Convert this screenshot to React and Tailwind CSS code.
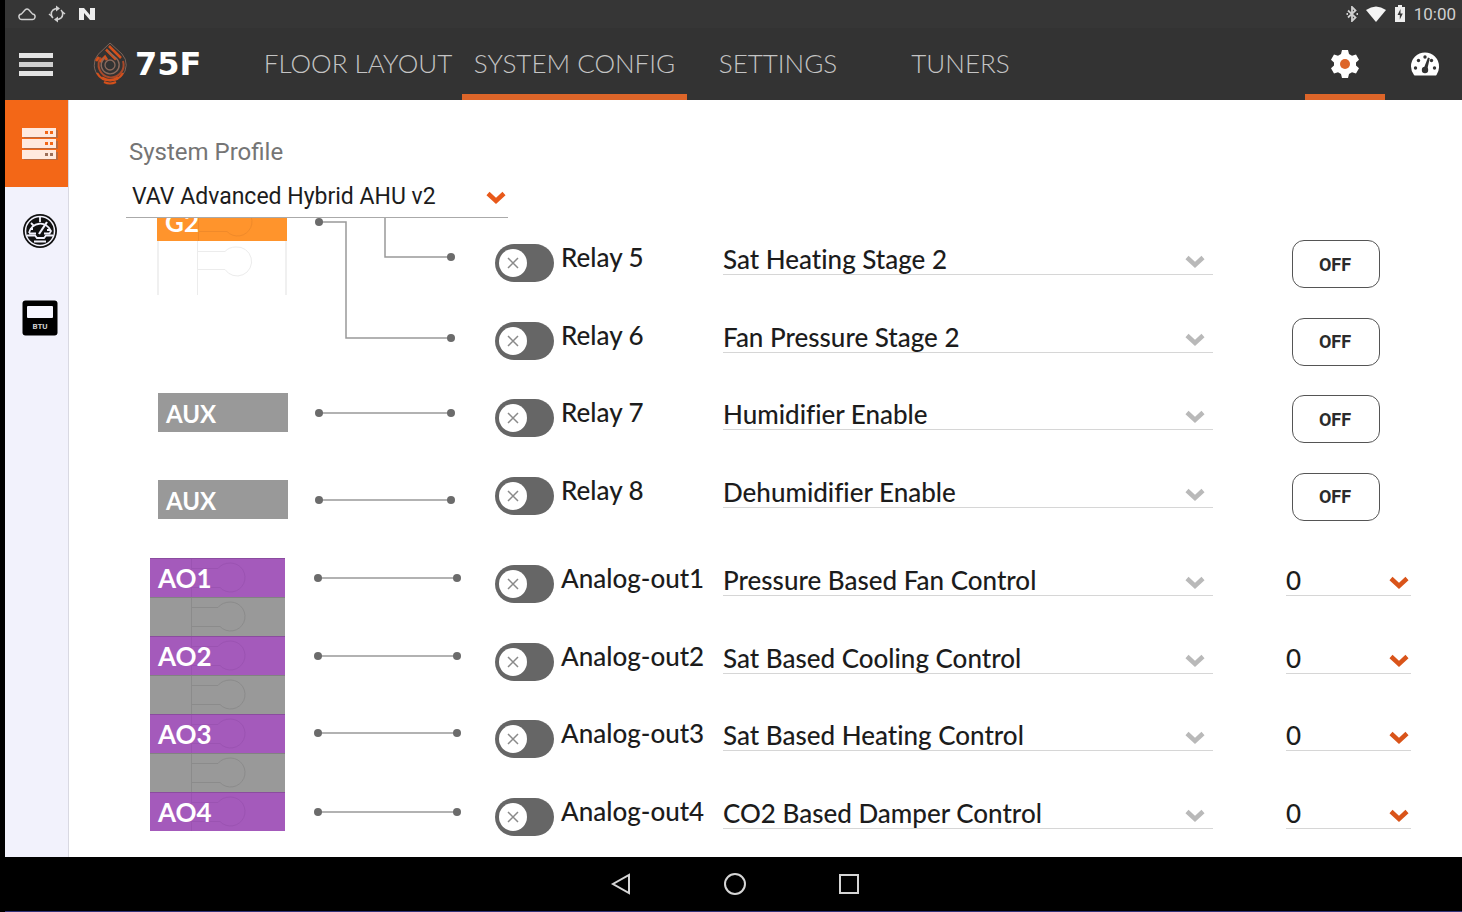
import { useState } from 'react';

const TABS = [
  { name: 'FLOOR LAYOUT', width: 'w-[208px]' },
  { name: 'SYSTEM CONFIG', width: 'w-[225px]' },
  { name: 'SETTINGS', width: 'w-[182px]' },
  { name: 'TUNERS', width: 'w-[183px]' },
];

const PROFILES = ['VAV Advanced Hybrid AHU v2', 'VAV Fully Modulating AHU', 'VAV Staged RTU'];

const RELAYS = [
  { id: 'relay5', label: 'Relay 5', mapping: 'Sat Heating Stage 2' },
  { id: 'relay6', label: 'Relay 6', mapping: 'Fan Pressure Stage 2' },
  { id: 'relay7', label: 'Relay 7', mapping: 'Humidifier Enable' },
  { id: 'relay8', label: 'Relay 8', mapping: 'Dehumidifier Enable' },
];

const ANALOGS = [
  { id: 'analog1', label: 'Analog-out1', mapping: 'Pressure Based Fan Control' },
  { id: 'analog2', label: 'Analog-out2', mapping: 'Sat Based Cooling Control' },
  { id: 'analog3', label: 'Analog-out3', mapping: 'Sat Based Heating Control' },
  { id: 'analog4', label: 'Analog-out4', mapping: 'CO2 Based Damper Control' },
];

const WIRES = [
  { path: 'M31 4H58V120H163', dots: [[31, 4], [163, 120]] },
  { path: 'M97 0V39H163', dots: [[163, 39]] },
  { path: 'M31 195H163', dots: [[31, 195], [163, 195]] },
  { path: 'M31 282H163', dots: [[31, 282], [163, 282]] },
  { path: 'M30 360H169', dots: [[30, 360], [169, 360]] },
  { path: 'M30 438H169', dots: [[30, 438], [169, 438]] },
  { path: 'M30 515H169', dots: [[30, 515], [169, 515]] },
  { path: 'M30 594H169', dots: [[30, 594], [169, 594]] },
];

function Chevron({ className }) {
  return (
    <svg viewBox="0 0 20 14" className={`pointer-events-none absolute h-[14px] w-5 ${className}`} fill="none" stroke="currentColor" strokeWidth="4.5">
      <path d="M2 2.5L10 10L18 2.5" />
    </svg>
  );
}

function StatusBar() {
  return (
    <div className="flex h-7 items-center justify-between bg-[#363636] pr-[6px] pl-[13px] text-[#d0d0d0]">
      <div className="flex items-center gap-3">
        <svg viewBox="0 0 18 14" className="h-[14px] w-[18px]" fill="none" stroke="currentColor" strokeWidth="1.5">
          <path d="M4 12.500a2.800 2.800 0 0 1-.5-5.600L7 3Q9 1 11 3l3.500 3.900a2.800 2.800 0 0 1-.5 5.600z" />
        </svg>
        <svg viewBox="0 0 18 18" className="h-[18px] w-[18px]" fill="none" stroke="currentColor" strokeWidth="1.6">
          <path d="M5 13A5.500 5.500 0 0 1 5 5L8 3.500M13 5A5.500 5.500 0 0 1 13 13L10 14.500" />
          <path d="M8 0.500L12 3.500L8 6.500zM10 11.500L6 14.500L10 17.500z" fill="currentColor" stroke="none" />
          <path d="M1 9l2.500 2M17 9l-2.500-2" />
        </svg>
        <svg viewBox="0 0 18 14" className="h-[14px] w-[18px]" fill="#eeeeee">
          <path d="M1 1h5l6 7V1h5v12h-5L6 6v7H1z" />
        </svg>
      </div>
      <div className="flex items-center gap-[8px]">
        <svg viewBox="0 0 12 16" className="h-4 w-3" fill="none" stroke="currentColor" strokeWidth="1.8">
          <path d="M2 4.500L9.500 11.500L6 15V1L9.500 4.500L2 11.500" />
          <path d="M0.500 8h1.500M10.500 8h1.500" />
        </svg>
        <svg viewBox="0 0 20 16" className="h-4 w-5" fill="#f4f4f4">
          <path d="M0 4Q10-3 20 4L10 16z" />
        </svg>
        <svg viewBox="0 0 12 18" className="h-[18px] w-3" fill="#eeeeee">
          <path d="M4 0h4v2h3v15H1V2h3z" />
          <path d="M6.500 4L3.500 10h2.300v4.500L8.800 8.500H6.500z" fill="#363636" />
        </svg>
        <span className="font-['Roboto',sans-serif] text-[17px] leading-7">10:00</span>
      </div>
    </div>
  );
}

function Logo() {
  return (
    <a href="#home" className="ml-10 flex items-center gap-[6px]" aria-label="75F home">
      <svg viewBox="0 0 36 44" className="h-11 w-9" fill="none">
        <path d="M17 1L5 12.500A16 16 0 1 0 29 12Z" stroke="#7d6459" strokeWidth="1" />
        <path d="M13 7.500L23 17.500M16 4L28 16" stroke="#d4501b" strokeWidth="2.500" />
        <path d="M8 15.500A12.500 12.500 0 1 0 30 19" stroke="#a8492a" strokeWidth="2" />
        <path d="M3 19L6 15M7 20L12 15L14 18" stroke="#d4501b" strokeWidth="2.800" />
        <path d="M12 15.500A9 9 0 1 0 23 16L15 9" stroke="#8b6a5c" strokeWidth="1.400" />
        <circle cx="17" cy="23" r="5" stroke="#8b6a5c" strokeWidth="1.300" />
        <path d="M4 31A15 15 0 0 0 30 31M9 35.500A15 15 0 0 0 25 35.500" stroke="#d4501b" strokeWidth="2.200" />
        <path d="M11 40Q17 43 23 40" stroke="#d4501b" strokeWidth="2" />
      </svg>
      <span className="font-['DejaVu_Sans',sans-serif] text-[32px] leading-9 font-bold text-white">75F</span>
    </a>
  );
}

function NavBar({ tab, onTab }) {
  return (
    <div className="flex h-[72px] items-center bg-[#333333] pl-[14px]">
      <button aria-label="Menu" className="flex w-[34px] flex-col gap-1">
        <span className="h-[5px] w-full bg-[#e4e4e4]"></span>
        <span className="h-[5px] w-full bg-[#cfcfcf]"></span>
        <span className="h-[5px] w-full bg-[#e4e4e4]"></span>
      </button>
      <div className="w-[201px] shrink-0">
        <Logo />
      </div>
      <nav className="flex h-full flex-1">
        {TABS.map(({ name, width }) => (
          <button
            key={name}
            onClick={() => onTab(name)}
            className={`${width} h-full border-b-[6px] pt-[3px] font-['Lato',sans-serif] text-[26px] leading-8 font-light whitespace-nowrap text-[#c4c4c4] ${
              tab === name ? 'border-b-[#dd6529]' : 'border-b-transparent'
            }`}
          >
            {name}
          </button>
        ))}
      </nav>
      <button aria-label="Configuration" className="flex h-full w-20 items-center justify-center border-y-[6px] border-t-transparent border-b-[#dd6529]">
        <svg viewBox="0 0 28 28" className="h-7 w-7">
          <path
            d="M11 0h6l1 4 3 1.700 4-1.200 3 5.200-3 2.800v3l3 2.800-3 5.200-4-1.200-3 1.700-1 4h-6l-1-4-3-1.700-4 1.200-3-5.200 3-2.800v-3L0 9.700l3-5.200 4 1.200L10 4z"
            fill="#ffffff"
          />
          <circle cx="14" cy="14" r="5" fill="#dd6529" />
        </svg>
      </button>
      <button aria-label="Dashboard" className="flex h-full w-[77px] items-center justify-center pl-[3px]">
        <svg viewBox="0 0 28 24" className="h-6 w-7">
          <path d="M3 23A14 14 0 0 1 0 14.500a14 14 0 0 1 28 0A14 14 0 0 1 25.500 23q-.5.500-1.500.500H4.500Q3.500 23.500 3 23z" fill="#ffffff" />
          <g fill="#333333">
            <circle cx="4.500" cy="16" r="1.700" />
            <circle cx="7.500" cy="8.500" r="1.700" />
            <circle cx="14" cy="5" r="1.700" />
            <circle cx="20.500" cy="8.500" r="1.700" />
            <circle cx="23.500" cy="16" r="1.700" />
            <circle cx="14" cy="18" r="3.200" />
            <path d="M12.500 17L17 5.500l1.800.7L16 18.500z" />
          </g>
        </svg>
      </button>
    </div>
  );
}

function SideBar() {
  return (
    <aside className="flex w-16 shrink-0 flex-col border-r border-[#d9d9e2] bg-[#f2f2fc]">
      <button aria-label="System" className="flex h-[87px] items-center justify-center bg-[#f36717] pl-[6px]">
        <svg viewBox="0 0 36 32" className="h-8 w-9">
          <path d="M2 2h34v8H2zM2 13h34v8H2zM2 24h34v8H2z" fill="#b9683e" />
          <path d="M0 0h34v9H0zM0 11h34v9H0zM0 22h34v9H0z" fill="#ffe9de" />
          <path d="M23 3h3v3h-3zM28 3h3v3h-3zM23 14h3v3h-3zM28 14h3v3h-3z" fill="#f36717" />
          <path d="M23 25h3v3h-3zM28 25h3v3h-3z" fill="#9c6f5a" />
        </svg>
      </button>
      <button aria-label="Gauge" className="flex h-[87px] items-center justify-center pl-[6px]">
        <svg viewBox="0 0 36 36" className="h-9 w-9" fill="none">
          <circle cx="18" cy="18" r="17" fill="#111111" />
          <circle cx="18" cy="18" r="14.500" stroke="#f2f2fc" strokeWidth="1.500" />
          <path d="M7 20A11.500 11.500 0 0 1 29 18L27.500 20.500H22M7 20.500H14" stroke="#f2f2fc" strokeWidth="1.800" />
          <path d="M18 4V9M9 10l3 3M8 16h3M25 17h3" stroke="#f2f2fc" strokeWidth="1.800" />
          <path d="M17 21L25 9" stroke="#f2f2fc" strokeWidth="2.200" />
          <path d="M5 22.500H13L15 25H22L24 22.500H31M12 28.500H24" stroke="#f2f2fc" strokeWidth="1.800" />
        </svg>
      </button>
      <button aria-label="BTU meter" className="flex h-[87px] items-center justify-center pl-[6px]">
        <svg viewBox="0 0 36 36" className="h-9 w-9">
          <rect width="35" height="35" y="0.500" x="0.500" rx="3" fill="#000000" />
          <rect x="5" y="6" width="26" height="12" rx="1" fill="#f6f6ff" />
          <text x="18" y="29" textAnchor="middle" className="font-['Roboto',sans-serif] text-[8px] font-bold" fill="#d0d0d0">
            BTU
          </text>
        </svg>
      </button>
    </aside>
  );
}

function Keyhole({ className }) {
  return (
    <svg viewBox="0 0 135 39" className={`absolute inset-x-0 bottom-0 h-[39px] w-[135px] ${className}`} fill="none" stroke="currentColor">
      <path d="M41.500 0V39M41 10.500H68Q72 5 81 5A14.500 14.500 0 1 1 70 29.500H41" />
    </svg>
  );
}

function Terminal({ label, color, lines }) {
  return (
    <div className={`relative h-[39px] overflow-hidden border-t border-black/15 pl-2 font-['Lato',sans-serif] text-[26px] leading-[38px] font-bold text-white ${color}`}>
      <Keyhole className={lines} />
      <span className="relative">{label}</span>
    </div>
  );
}

function TerminalBlocks() {
  return (
    <div className="flex w-[139px] shrink-0 flex-col">
      <div className="ml-2 flex h-[23px] w-[130px] items-end overflow-hidden">
        <div className="w-full">
          <Terminal label="G2" color="bg-[#ff942c]" lines="text-[#f08a2a]" />
        </div>
      </div>
      <div className="ml-2 h-[54px] w-[130px] overflow-hidden border-x-2 border-[#f0f0f0]">
        <svg viewBox="0 0 126 54" className="h-[54px] w-[126px]" fill="none" stroke="#ececec">
          <path d="M38.500 0V54M38 10.500H66Q70 6 77 6A14.500 14.500 0 1 1 66 28.500H38" />
        </svg>
      </div>
      <div className="mt-[98px] ml-[9px] flex flex-col gap-12">
        {['first', 'second'].map((key) => (
          <div key={key} className="h-[39px] bg-[#999999] pl-2 font-['Lato',sans-serif] text-2xl leading-[42px] font-bold text-white">
            AUX
          </div>
        ))}
      </div>
      <div className="mt-[39px] ml-px w-[135px]">
        <Terminal label="AO1" color="bg-[#a45abb]" lines="text-[#9b53b2]" />
        <Terminal color="bg-[#999999]" lines="text-[#8b8b8b]" />
        <Terminal label="AO2" color="bg-[#a45abb]" lines="text-[#9b53b2]" />
        <Terminal color="bg-[#999999]" lines="text-[#8b8b8b]" />
        <Terminal label="AO3" color="bg-[#a45abb]" lines="text-[#9b53b2]" />
        <Terminal color="bg-[#999999]" lines="text-[#8b8b8b]" />
        <Terminal label="AO4" color="bg-[#a45abb]" lines="text-[#9b53b2]" />
      </div>
    </div>
  );
}

function Wires() {
  return (
    <svg viewBox="0 0 184 639" className="mr-[23px] h-[639px] w-[184px] shrink-0" fill="none">
      {WIRES.map(({ path, dots }) => (
        <g key={path}>
          <path d={path} stroke="#999999" strokeWidth="1.500" />
          {dots.map(([x, y]) => (
            <circle key={`${x}-${y}`} cx={x} cy={y} r="4" fill="#6b6b6b" />
          ))}
        </g>
      ))}
    </svg>
  );
}

function OutputRow({ row, children }) {
  const [enabled, setEnabled] = useState(false);

  return (
    <div className="flex items-start pt-[15px] font-['Lato',sans-serif] text-[26px] font-medium text-[#1c1c1c] [font-variant-ligatures:no-common-ligatures]">
      <div className="relative mt-1 mr-[7px] h-[38px] w-[59px] shrink-0">
        <input
          id={row.id}
          type="checkbox"
          checked={enabled}
          onChange={(e) => setEnabled(e.target.checked)}
          className="peer block h-[38px] w-[59px] appearance-none rounded-full bg-[#666666] checked:bg-[#f36717]"
        />
        <span className="pointer-events-none absolute top-[5px] left-1 flex h-7 w-7 items-center justify-center rounded-full bg-white peer-checked:left-[27px]">
          <svg viewBox="0 0 12 12" className="h-3 w-3" stroke="#8a8a8a" strokeWidth="1.500">
            <path d="M1 1L11 11M11 1L1 11" />
          </svg>
        </span>
      </div>
      <label htmlFor={row.id} className="w-[162px] shrink-0 leading-[34px] whitespace-nowrap">
        {row.label}
      </label>
      <div className="relative mr-[73px] flex-1">
        <select aria-label={`${row.label} mapping`} className="block h-[35px] w-full appearance-none border-b border-[#d6d6d6]">
          <option>{row.mapping}</option>
        </select>
        <Chevron className="top-[15px] right-2 text-[#b9b9b9]" />
      </div>
      <div className="w-[125px] shrink-0">{children}</div>
    </div>
  );
}

function RelayTest({ label }) {
  const [on, setOn] = useState(false);

  return (
    <button
      aria-label={`${label} test ${on ? 'ON' : 'OFF'}`}
      onClick={() => setOn(!on)}
      className="ml-[6px] h-12 w-[88px] rounded-xl border border-[#555555] pt-px pr-[2px] font-['Roboto',sans-serif] text-lg font-bold text-[#2b2b2b]"
    >
      {on ? 'ON' : 'OFF'}
    </button>
  );
}

function AnalogTest({ label }) {
  return (
    <div className="relative">
      <select aria-label={`${label} test signal`} className="block h-[35px] w-full appearance-none border-b border-[#d6d6d6]">
        <option>0</option>
        <option>10</option>
      </select>
      <Chevron className="top-[15px] right-[2px] text-[#d9541a]" />
    </div>
  );
}

function App() {
  const [tab, setTab] = useState('SYSTEM CONFIG');

  return (
    <div className="flex min-h-screen flex-col border-l-[5px] border-black bg-white">
      <header>
        <StatusBar />
        <NavBar tab={tab} onTab={setTab} />
      </header>

      <div className="flex flex-1">
        <SideBar />

        <main className="flex-1 pt-9">
          {/* Profile picker */}
          <div className="flex flex-col gap-[10px] pl-[57px] font-['Roboto',sans-serif] text-2xl">
            <label htmlFor="profile" className="pl-[3px] leading-8 text-[#757575]">
              System Profile
            </label>
            <div className="relative w-[382px]">
              <select id="profile" className="block h-10 w-full appearance-none border-b border-[#aaaaaa] pl-[6px] text-[23px] text-[#1c1c1c]">
                {PROFILES.map((profile) => (
                  <option key={profile}>{profile}</option>
                ))}
              </select>
              <Chevron className="top-[13px] right-[2px] text-[#e8591a]" />
            </div>
          </div>

          {/* Terminals, wiring and outputs */}
          <div className="flex pr-[51px] pl-20">
            <TerminalBlocks />
            <Wires />
            <div className="flex-1 pt-[7px]">
              <div className="grid h-[310px] grid-rows-4">
                {RELAYS.map((row) => (
                  <OutputRow key={row.id} row={row}>
                    <RelayTest label={row.label} />
                  </OutputRow>
                ))}
              </div>
              <div className="mt-[11px] grid h-[310px] grid-rows-4">
                {ANALOGS.map((row) => (
                  <OutputRow key={row.id} row={row}>
                    <AnalogTest label={row.label} />
                  </OutputRow>
                ))}
              </div>
            </div>
          </div>
        </main>
      </div>

      {/* Android navigation */}
      <footer className="flex h-[55px] items-center justify-center gap-[90px] border-b border-[#33337a] bg-black pl-[2px] text-[#d5d5d5]">
        <button aria-label="Back">
          <svg viewBox="0 0 24 24" className="h-6 w-6" fill="none" stroke="currentColor" strokeWidth="2">
            <path d="M20 3V21L4 12z" />
          </svg>
        </button>
        <button aria-label="Home">
          <svg viewBox="0 0 24 24" className="h-6 w-6" fill="none" stroke="currentColor" strokeWidth="2">
            <circle cx="12" cy="12" r="10" />
          </svg>
        </button>
        <button aria-label="Recent apps">
          <svg viewBox="0 0 24 24" className="h-6 w-6" fill="none" stroke="currentColor" strokeWidth="2">
            <path d="M3 3H21V21H3z" />
          </svg>
        </button>
      </footer>
    </div>
  );
}

export default App;
